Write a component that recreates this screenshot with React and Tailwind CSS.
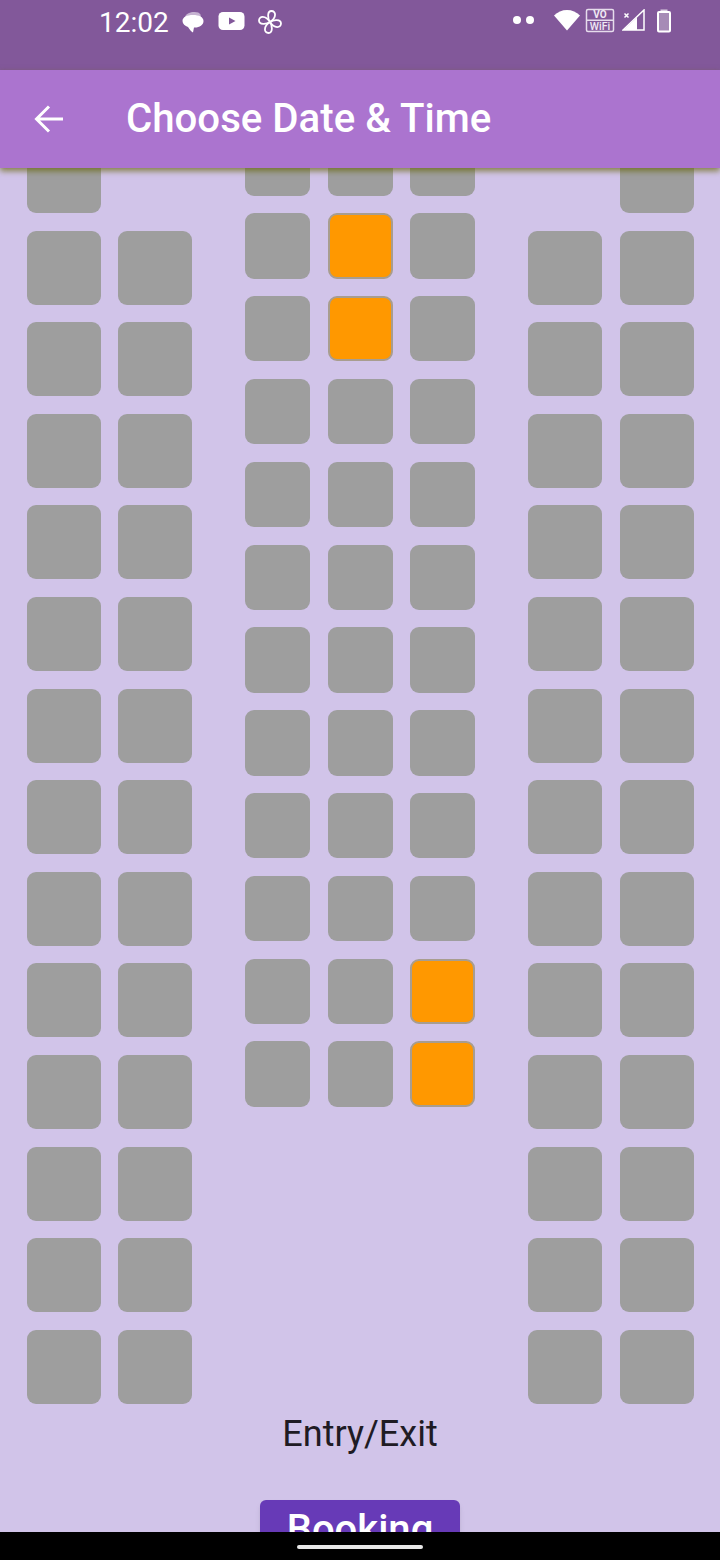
import { Fragment } from "react";

const sideRows = Array.from({ length: 14 }, (_, i) => i);
const centerRows = Array.from({ length: 12 }, (_, i) => i);

// seats that are booked in the middle block, as "row-col"
const bookedSeats = ["1-1", "2-1", "10-2", "11-2"];

const petal = "M13 13C10.500 9.500 10 2 14.500 2 19 2 20 8.500 13 13z";

function StatusIcons() {
	return (
		<Fragment>
			<svg width="24" height="24" viewBox="0 0 24 24" className="absolute left-[181px] top-[10px]">
				<path d="M4 7C5 3.500 9 2 13.500 2c3 0 5 .8 6 2.500l.5 3z" fill="#fff" opacity="0.55" />
				<path d="M12 5c6 0 10.500 2 10.500 6s-4 6.500-8.500 6.500h-1l-1 5c-1.500-.5-3.500-3-5-5.500C4 16 1.500 14 1.500 11 1.500 7 6 5 12 5z" fill="#fff" />
			</svg>
			<svg width="28" height="20" viewBox="0 0 28 20" className="absolute left-[218px] top-[11px]">
				<rect x="0.500" y="1" width="26" height="18" rx="4.500" fill="#fff" />
				<path d="M11 6.500v7l6.500-3.500z" fill="#82589a" />
			</svg>
			<svg width="26" height="26" viewBox="0 0 26 26" fill="none" stroke="#fff" strokeWidth="1.800" className="absolute left-[257px] top-[9px]">
				<path d={petal} />
				<path d={petal} transform="rotate(90 13 13)" />
				<path d={petal} transform="rotate(180 13 13)" />
				<path d={petal} transform="rotate(270 13 13)" />
			</svg>

			<span className="absolute left-[513px] top-[16px] w-[8px] h-[8px] rounded-full bg-white" />
			<span className="absolute left-[526px] top-[16px] w-[8px] h-[8px] rounded-full bg-white" />
			<svg width="28" height="22" viewBox="0 0 28 22" className="absolute left-[553px] top-[9px]">
				<path d="M14 21.500 1 6.500C4.500 3 9 1 14 1s9.500 2 13 5.500z" fill="#fff" />
			</svg>
			<svg width="30" height="25" viewBox="0 0 30 25" className="absolute left-[585px] top-[8px]">
				<rect x="1.500" y="1.500" width="27" height="22" rx="1.500" fill="none" stroke="#e6dcec" strokeWidth="1.500" />
				<rect x="2" y="11.500" width="26" height="1.500" fill="#e6dcec" />
				<text x="15" y="10.300" textAnchor="middle" fill="#efe8f3" fontSize="10" fontWeight="700" fontFamily="Roboto, sans-serif">VO</text>
				<text x="15" y="21.800" textAnchor="middle" fill="#efe8f3" fontSize="10.500" fontWeight="500" fontFamily="Roboto, sans-serif">WiFi</text>
			</svg>
			<svg width="24" height="22" viewBox="0 0 24 22" className="absolute left-[622px] top-[9px]">
				<path d="M22 1v20H1z" fill="none" stroke="#fff" strokeWidth="1.500" />
				<path d="M15 8.500V21H1.500z" fill="#fff" />
				<path d="M2.500 4.500l4 4M6.500 4.500l-4 4" stroke="#fff" strokeWidth="1.500" />
			</svg>
			<svg width="16" height="24" viewBox="0 0 16 24" className="absolute left-[656px] top-[8.500px]">
				<rect x="4.500" y="0.500" width="7" height="2.500" fill="#d9cde0" />
				<rect x="2" y="3" width="12" height="19.500" rx="1" fill="#a68bb6" stroke="#fff" strokeWidth="2" />
			</svg>
		</Fragment>
	);
}

function SideBlock({ hiddenFirst }) {
	return (
		<div className="grid grid-cols-[74.1px_74.1px] gap-x-[17.5px] gap-y-[17.6px]">
			{sideRows.map((row) => (
				<Fragment key={row}>
					<div className={`h-[74px] rounded-[9px] ${row === 0 && hiddenFirst === "left" ? "invisible" : "bg-[#9e9e9e]"}`} />
					<div className={`h-[74px] rounded-[9px] ${row === 0 && hiddenFirst === "right" ? "invisible" : "bg-[#9e9e9e]"}`} />
				</Fragment>
			))}
		</div>
	);
}

function CenterBlock() {
	return (
		<div className="grid grid-cols-[65.2px_65.2px_65.2px] gap-x-[17.4px] gap-y-[17.45px] -mt-[8.7px]">
			{centerRows.map((row) =>
				[0, 1, 2].map((col) => (
					<div
						key={`${row}-${col}`}
						className={
							bookedSeats.includes(`${row}-${col}`)
								? "h-[65.4px] rounded-[9px] bg-[#ff9800] border-2 border-[#a89d8f]"
								: "h-[65.4px] rounded-[9px] bg-[#9e9e9e]"
						}
					/>
				))
			)}
		</div>
	);
}

export default function App() {
	return (
		<div className="relative w-[720px] h-[1560px] flex flex-col overflow-hidden bg-[#d1c4e9] font-['Roboto',sans-serif]">
			<div className="relative h-[70px] shrink-0 bg-[#82589a] text-white">
				<span className="absolute left-[99px] top-[6px] text-[28px] leading-[33px]">12:02</span>
				<StatusIcons />
			</div>

			<header className="relative z-10 h-[98px] shrink-0 flex items-center bg-[#ab74cf] text-white shadow-[0_3px_6px_rgba(100,100,0,0.7)]">
				<svg width="32" height="32" viewBox="0 0 32 32" fill="none" stroke="#fff" strokeWidth="3" className="ml-[33px]">
					<path d="M30 16H4M16 3.500 3.500 16 16 28.500" />
				</svg>
				<h1 className="ml-[61px] text-[40.2px] leading-[44px] font-medium">Choose Date &amp; Time</h1>
			</header>

			<main className="flex-1 overflow-hidden">
				<div className="-mt-[28.95px] flex flex-col items-center">
					<div className="w-full flex justify-between items-start pl-[26.6px] pr-[26.4px]">
						<SideBlock hiddenFirst="right" />
						<CenterBlock />
						<SideBlock hiddenFirst="left" />
					</div>
					<p className="mt-[9.15px] text-[36px] leading-[42px] text-[#1f1b24]">Entry/Exit</p>
					<button className="mt-[45px] w-[200px] h-[60px] rounded-[6px] bg-[#673ab7] text-white text-[40px] leading-[60px] font-medium shadow-md">
						Booking
					</button>
				</div>
			</main>

			<div className="absolute left-0 bottom-0 w-full h-[28px] flex items-center justify-center bg-black">
				<span className="w-[126px] h-[4px] mt-[2px] rounded-full bg-[#e8e8e8]" />
			</div>
		</div>
	);
}
